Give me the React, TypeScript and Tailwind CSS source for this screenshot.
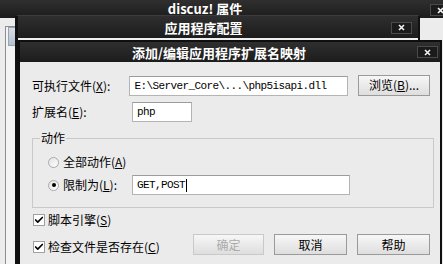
import { Check } from "lucide-react";

const cjk = "font-['Noto_Sans_CJK_SC','Noto_Sans',sans-serif]";
const mono = "font-['Liberation_Mono','Noto_Sans_CJK_SC',monospace]";

function CloseButton() {
  return (
    <div className="flex h-[12px] w-[21px] shrink-0 items-center justify-center border border-[#4a4a4a] bg-[#1b1b1b]">
      <svg width="7" height="7" viewBox="0 0 7 7">
        <path d="M1 1L6 6M6 1L1 6" stroke="#f2f2f2" strokeWidth="1.6" />
      </svg>
    </div>
  );
}

function TitleBar({ title, height, padRight, closeMargin }: { title: string; height: string; padRight: string; closeMargin: string }) {
  return (
    <div className={`flex ${height} shrink-0 items-center bg-gradient-to-b from-[#2f2f2f] to-[#1c1c1c]`}>
      <div className={`flex-1 text-center text-[13px] font-bold leading-none text-white ${padRight}`}>{title}</div>
      <div className={closeMargin}>
        <CloseButton />
      </div>
    </div>
  );
}

function Field({ value, width, caret }: { value: string; width: string; caret?: boolean }) {
  return (
    <div className={`flex h-[20px] ${width} items-center border border-[#b4b4b4] border-t-[#9c9c9c] bg-white pl-[4px]`}>
      <span className={`${mono} text-[11px] leading-none tracking-[-0.6px] text-black whitespace-nowrap`}>{value}</span>
      {caret && <span className="ml-[1px] h-[13px] w-[1px] bg-black" />}
    </div>
  );
}

function Btn({ children, width, disabled }: { children: React.ReactNode; width: string; disabled?: boolean }) {
  return (
    <div
      className={`flex h-[21px] ${width} items-center justify-center border bg-gradient-to-b from-[#f7f7f7] to-[#dedede] text-[12px] leading-none ${
        disabled ? "border-[#c9c9c9] text-[#ababab]" : "border-[#9a9a9a] text-black"
      }`}
    >
      {children}
    </div>
  );
}

function Radio({ checked }: { checked?: boolean }) {
  return (
    <div className="flex h-[11px] w-[11px] shrink-0 items-center justify-center rounded-full border border-[#a9a9a9] bg-gradient-to-br from-[#e2e2e2] to-white">
      {checked && <div className="h-[4px] w-[4px] rounded-full bg-black" />}
    </div>
  );
}

function CheckBox() {
  return (
    <div className="flex h-[12px] w-[12px] shrink-0 items-center justify-center border border-[#a0a0a0] bg-white">
      <Check size={10} strokeWidth={4} className="text-black" />
    </div>
  );
}

export default function App() {
  return (
    <div className={`relative h-[264px] w-[443px] overflow-hidden bg-[#ececec] ${cjk}`}>
      {/* discuz! 属件 */}
      <div className="absolute left-0 top-0 flex h-[264px] w-[443px] flex-col">
        <TitleBar title="discuz! 属件" height="h-[18px] pb-[2px]" padRight="pr-[20px]" closeMargin="-mr-[8px] mt-[4px]" />
        <div className="flex-1 bg-[#ececec] pl-[5px] pt-[8px]">
          <div className="h-full w-[12px] border-l border-t border-[#8e8e8e] bg-[#f4f4f4] pl-[2px]">
            <div className="h-[19px] w-[10px] border border-[#98a4b4] bg-gradient-to-b from-[#d6dde8] to-[#b6c1d0]" />
          </div>
        </div>
      </div>

      {/* 应用程序配置 */}
      <div className="absolute left-[15px] top-[15px] flex h-[260px] w-[405px] flex-col border-l-[3px] border-r-2 border-t border-[#111] border-t-[#3c3c3c]">
        <TitleBar title="应用程序配置" height="h-[22px]" padRight="pr-[2px]" closeMargin="mr-[6px] mt-[1px]" />
        <div className="flex-1 bg-[#efefef]" />
      </div>

      {/* 添加/编辑应用程序扩展名映射 */}
      <div className="absolute left-[18px] top-[40px] flex h-[240px] w-[424px] flex-col border-2 border-[#0f0f0f]">
        <TitleBar title="添加/编辑应用程序扩展名映射" height="h-[20px]" padRight="pl-[1px]" closeMargin="mr-[2px]" />
        <div className="flex flex-1 flex-col bg-[#ebebeb] pl-[12px] pr-[10px] pt-[14px] text-[12px] leading-[16px] text-black">
          <div className="flex items-center">
            <div className="w-[98px]">
              可执行文件(<span className="underline">X</span>):
            </div>
            <Field value="E:\Server_Core\...\php5isapi.dll" width="w-[220px]" />
            <div className="ml-[10px] -mt-[2px]">
              <Btn width="w-[72px]">
                <span>
                  浏览(<span className="underline">B</span>)...
                </span>
              </Btn>
            </div>
          </div>

          <div className="mt-[6px] flex items-center">
            <div className="w-[100px]">
              扩展名(<span className="underline">E</span>):
            </div>
            <Field value="php" width="w-[60px]" />
          </div>

          <div className="relative mt-[16px] h-[70px] w-[402px] border border-[#c9c9c9] pl-[15px] pt-[15px]">
            <span className="absolute -top-[9px] left-[7px] bg-[#ebebeb] px-[1px]">动作</span>
            <div className="flex h-[16px] items-center">
              <Radio />
              <span className="ml-[4px]">
                全部动作(<span className="underline">A</span>)
              </span>
            </div>
            <div className="mt-[5px] flex items-center">
              <Radio checked />
              <span className="ml-[4px] w-[69px]">
                限制为(<span className="underline">L</span>):
              </span>
              <Field value="GET,POST" width="w-[218px]" caret />
            </div>
          </div>

          <div className="ml-[1px] mt-[4px] flex h-[16px] items-center">
            <CheckBox />
            <span className="ml-[3px]">
              脚本引擎(<span className="underline">S</span>)
            </span>
          </div>

          <div className="mt-[6px] flex items-end">
            <div className="ml-[1px] flex h-[16px] items-center">
              <CheckBox />
              <span className="ml-[3px]">
                检查文件是否存在(<span className="underline">C</span>)
              </span>
            </div>
            <div className="ml-auto flex gap-[10px]">
              <Btn width="w-[71px]" disabled>
                确定
              </Btn>
              <Btn width="w-[73px]">取消</Btn>
              <Btn width="w-[73px]">帮助</Btn>
            </div>
          </div>
        </div>
      </div>
    </div>
  );
}
